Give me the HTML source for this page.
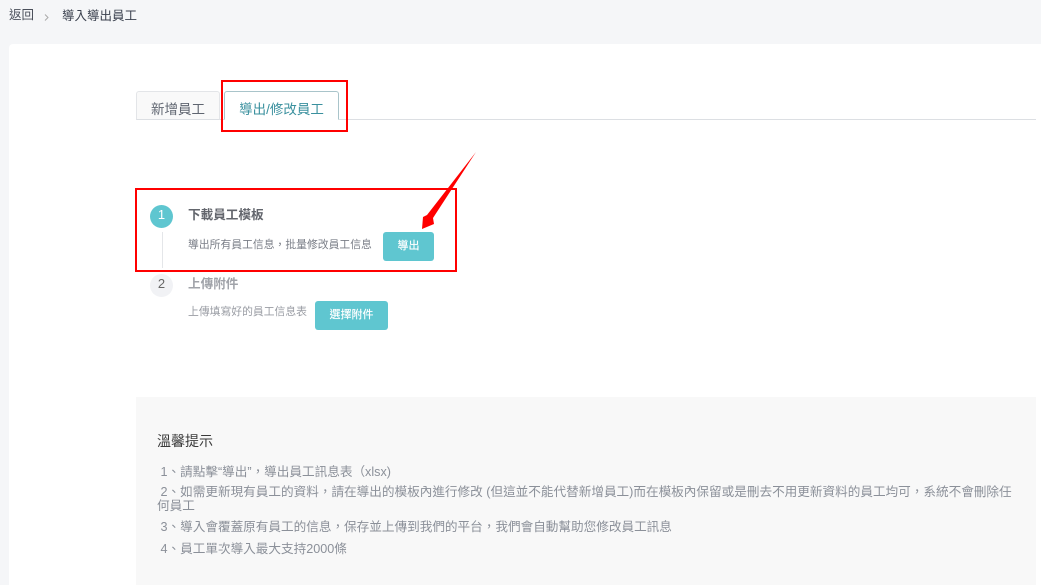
<!DOCTYPE html>
<html><head><meta charset="utf-8"><style>
html,body{margin:0;padding:0;width:1041px;height:585px;overflow:hidden;background:#f5f6f8}
body{position:relative;font-family:"Liberation Sans","Noto Sans CJK TC",sans-serif;color:#333}
.a{position:absolute;white-space:nowrap}
.card{position:absolute;left:9px;top:44px;width:1032px;height:541px;background:#fff;border-radius:4px 0 0 0}
.box{position:absolute;border:2px solid #f00;box-sizing:border-box}
.btn{position:absolute;background:#5fc6d0;color:#fff;border-radius:3px;font-size:11px;text-align:center;box-sizing:border-box;text-shadow:0 0 .5px #fff}
.li{position:absolute;left:157px;font-size:12.62px;color:#8b9099;white-space:nowrap;line-height:14px}
</style></head><body>
<div class="a" style="left:9px;top:6px;font-size:12.5px;line-height:18px;color:#4a4f5a">返回</div>
<svg class="a" style="left:44px;top:13px" width="6" height="9"><path d="M1 1.500l3 3-3 3" fill="none" stroke="#aaa" stroke-width="1"/></svg>
<div class="a" style="left:62px;top:7px;font-size:12.5px;line-height:18px;color:#3a404e">導入導出員工</div>
<div class="card"></div>
<div class="a" style="left:136px;top:119px;width:900px;height:1px;background:#dcdfe3"></div>
<div class="a" style="left:136px;top:91px;width:84px;height:29px;box-sizing:border-box;border:1px solid #e3e5e8;border-bottom:1px solid #dcdfe3;border-radius:3px 3px 0 0;background:#f9f9f9;text-align:center;font-size:13.5px;line-height:35px;color:#5f6570">新增員工</div>
<div class="a" style="left:224px;top:91px;width:115px;height:29px;box-sizing:border-box;border:1px solid #a9c4ca;border-bottom:1px solid #fff;border-radius:3px 3px 0 0;background:#fff;text-align:center;font-size:13.5px;line-height:35px;color:#3a909e">導出/修改員工</div>
<div class="box" style="left:221px;top:80px;width:127px;height:52px;"></div>

<div class="a" style="left:150px;top:205px;width:23px;height:23px;border-radius:50%;background:#5fc6d0;color:#fff;font-size:13px;line-height:20px;text-align:center">1</div>
<div class="a" style="left:162px;top:232px;width:1px;height:36px;background:#e4e6e9"></div>
<div class="a" style="left:188px;top:206px;font-size:12.6px;line-height:18px;font-weight:bold;color:#63666d">下載員工模板</div>
<div class="a" style="left:188px;top:237px;font-size:10.82px;line-height:16px;color:#7a7e87">導出所有員工信息，批量修改員工信息</div>
<div class="btn" style="left:383px;top:232px;width:51px;height:29px;line-height:29px">導出</div>
<div class="box" style="left:135px;top:188px;width:322px;height:84px"></div>

<div class="a" style="left:150px;top:274px;width:23px;height:23px;border-radius:50%;background:#f1f2f5;color:#666;font-size:13px;line-height:20px;text-align:center">2</div>
<div class="a" style="left:188px;top:275px;font-size:12.6px;line-height:18px;font-weight:bold;color:#a0a3a9">上傳附件</div>
<div class="a" style="left:188px;top:304px;font-size:10.82px;line-height:16px;color:#9a9da4">上傳填寫好的員工信息表</div>
<div class="btn" style="left:315px;top:301px;width:73px;height:29px;line-height:29px">選擇附件</div>

<svg class="a" style="left:415px;top:148px" width="66" height="86"><path d="M61 4L18 70L19 76L7 81L8 69L12 67Z" fill="#f00"/></svg>

<div class="a" style="left:136px;top:397px;width:900px;height:188px;background:#f8f8f8"></div>
<div class="a" style="left:157px;top:431px;font-size:14px;line-height:20px;color:#3a3a3a">溫馨提示</div>
<div class="li" style="top:465px"> &nbsp;1、請點擊“導出”，導出員工訊息表（xlsx)</div>
<div class="li" style="top:485px"> &nbsp;2、如需更新現有員工的資料，請在導出的模板內進行修改 (但這並不能代替新增員工)而在模板內保留或是刪去不用更新資料的員工均可，系統不會刪除任<br>何員工</div>
<div class="li" style="top:520px"> &nbsp;3、導入會覆蓋原有員工的信息，保存並上傳到我們的平台，我們會自動幫助您修改員工訊息</div>
<div class="li" style="top:542px"> &nbsp;4、員工單次導入最大支持2000條</div>
</body></html>
